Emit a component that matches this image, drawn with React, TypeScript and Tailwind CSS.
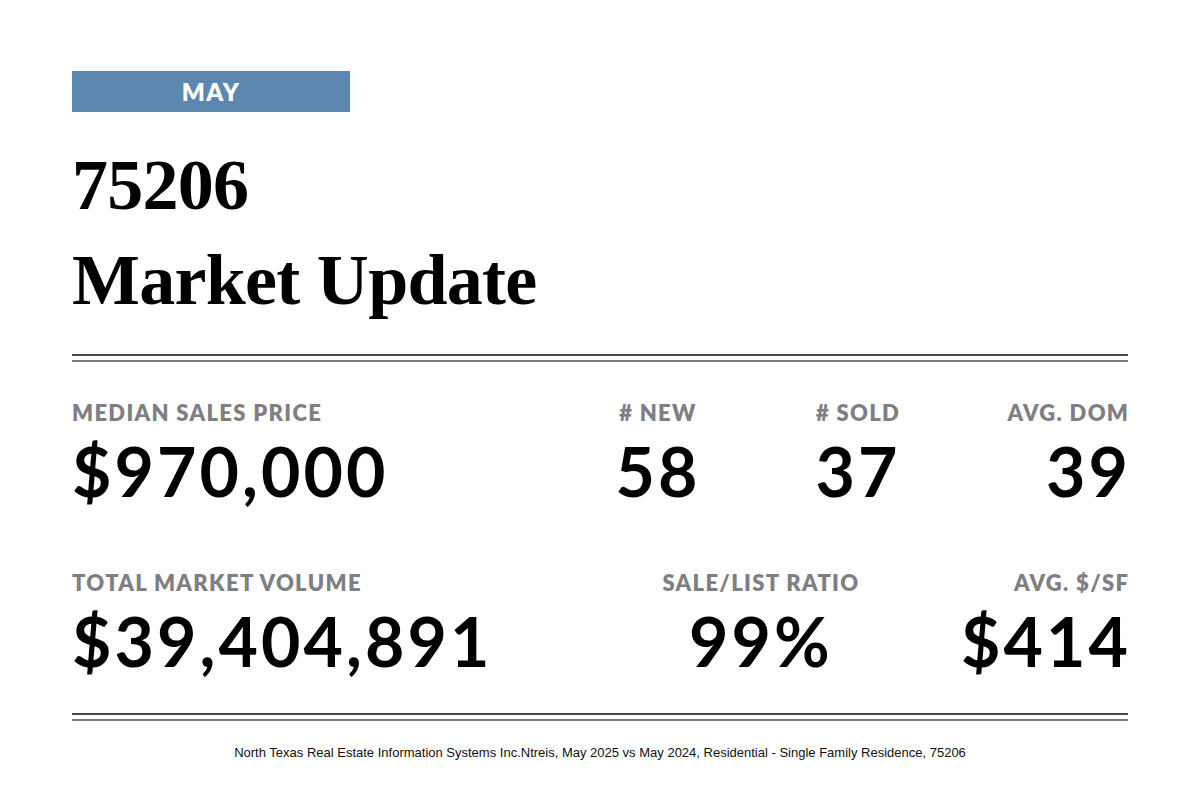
import React from 'react';

const sans = { fontFamily: 'Lato, "Noto Sans", sans-serif' };

const Label: React.FC<{ children: React.ReactNode; right?: boolean }> = ({ children, right }) => (
  <div
    className={`text-[22px] leading-none font-extrabold tracking-[0.06em] text-[#7f7f83] uppercase ${right ? 'mr-[-0.06em]' : ''}`}
  >
    {children}
  </div>
);

const Value: React.FC<{ children: React.ReactNode; right?: boolean }> = ({ children, right }) => (
  <div
    className={`mt-[13px] text-[68px] leading-none font-bold tracking-[0.045em] text-black ${right ? 'mr-[-0.045em]' : ''}`}
  >
    {children}
  </div>
);

const DoubleRule: React.FC<{ className?: string }> = ({ className = '' }) => (
  <div className={`h-[8px] border-t-2 border-b-2 border-t-[#4a4a4a] border-b-[#7a7a7a] ${className}`} />
);

export default function App() {
  return (
    <div className="w-full min-h-screen bg-white px-[72px] pt-[71px]" style={sans}>
      <div className="w-[278px] h-[41px] bg-[#5b87b1] flex items-center justify-center">
        <span className="text-white text-[24px] leading-none font-extrabold tracking-[0.06em]">MAY</span>
      </div>

      <h1
        className="mt-[26px] text-[72px] leading-[95px] font-bold text-black tracking-[-0.01em]"
        style={{ fontFamily: '"Liberation Serif", "DejaVu Serif", serif' }}
      >
        <div>75206</div>
        <div>Market Update</div>
      </h1>

      <DoubleRule className="mt-[26px]" />

      <div className="mt-[40px] grid grid-cols-[486px_200px_200px_170px]">
        <div>
          <Label>Median Sales Price</Label>
          <Value>$970,000</Value>
        </div>
        <div className="text-center">
          <Label># New</Label>
          <Value>58</Value>
        </div>
        <div className="text-center">
          <Label># Sold</Label>
          <Value>37</Value>
        </div>
        <div className="text-right">
          <Label right>Avg. DOM</Label>
          <Value right>39</Value>
        </div>
      </div>

      <div className="mt-[67px] grid grid-cols-[569px_240px_247px]">
        <div>
          <Label>Total Market Volume</Label>
          <Value>$39,404,891</Value>
        </div>
        <div className="text-center">
          <Label>Sale/List Ratio</Label>
          <Value>99%</Value>
        </div>
        <div className="text-right">
          <Label right>Avg. $/SF</Label>
          <Value right>$414</Value>
        </div>
      </div>

      <DoubleRule className="mt-[38px]" />

      <p
        className="mt-[25px] text-center text-[13px] leading-none text-[#111]"
        style={{ fontFamily: '"Liberation Sans", Arial, sans-serif' }}
      >
        North Texas Real Estate Information Systems Inc.Ntreis, May 2025 vs May 2024, Residential - Single Family Residence, 75206
      </p>
    </div>
  );
}
